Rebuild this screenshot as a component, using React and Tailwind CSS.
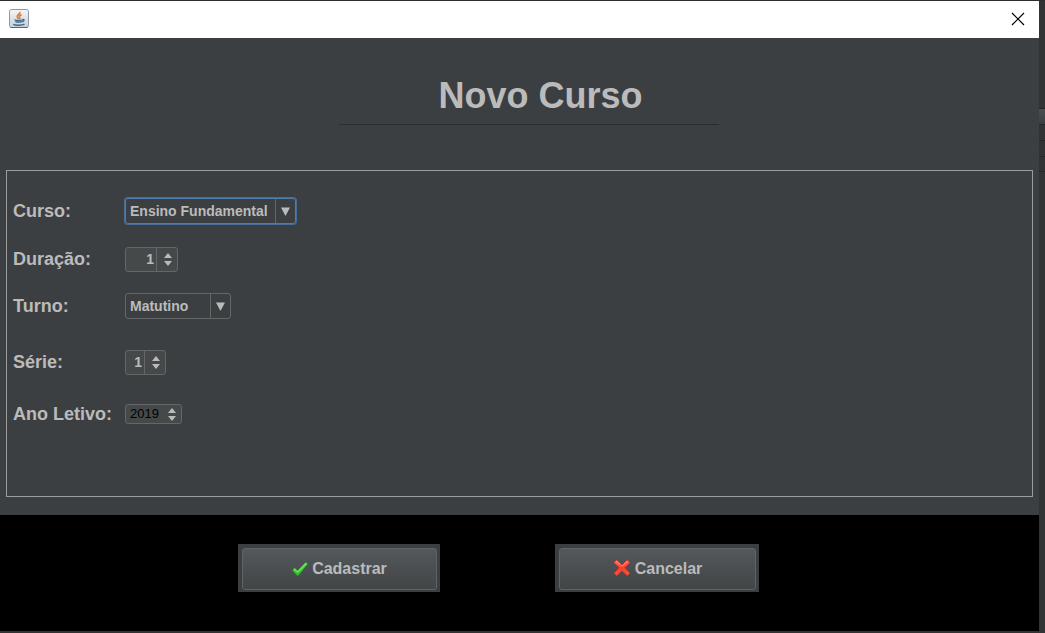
import React, { useState } from "react";

const FONT = "font-['Liberation_Sans',Arial,sans-serif]";

function JavaIcon() {
  return (
    <svg width="20" height="20" viewBox="0 0 20 20" aria-hidden="true">
      <defs>
        <linearGradient id="tile" x1="0" y1="0" x2="0" y2="1">
          <stop offset="0" stopColor="#f4f7f9" />
          <stop offset="1" stopColor="#c3d0da" />
        </linearGradient>
      </defs>
      <rect x="0.5" y="0.5" width="19" height="18" rx="2" fill="url(#tile)" stroke="#8b9aa6" />
      <path d="M1.5 18.5h17" stroke="#52687a" />
      <path d="M10.800 2.800c1 2-3.200 3-2.600 5 .2.900 1 1.300 1.400 2.200M12.600 5.600c-2 .8-2.700 1.600-2 2.700.5.800.3 1.200-.1 1.700" fill="none" stroke="#dc8045" strokeWidth="1.700" />
      <path d="M5.500 10.800c2 .7 6 .6 8 0M6.300 12.600c2 .6 4.600.6 6.400 0M13.500 10.500c2.200-.4 2 1.800-.6 2.400M4.300 15.200c1.500 1.400 9.500 1.300 11.200-.2" fill="none" stroke="#45698c" strokeWidth="1.400" />
    </svg>
  );
}

function CheckIcon() {
  return (
    <svg width="16" height="16" viewBox="0 0 16 16" aria-hidden="true">
      <defs>
        <linearGradient id="check" x1="0" y1="0" x2="0" y2="1">
          <stop offset="0" stopColor="#5be04a" />
          <stop offset="1" stopColor="#2fbe2c" />
        </linearGradient>
      </defs>
      <path d="M0.500 9.200 2.600 7l3 2.700L13.800 1.300l1.900 1.600L6.300 14.500H5z" fill="url(#check)" stroke="#239a22" strokeWidth="0.700" strokeLinejoin="round" />
      <path d="M1.800 9 2.700 8.200l2.900 2.800 8.200-8.500" fill="none" stroke="#a5f590" strokeWidth="0.900" />
    </svg>
  );
}

function CrossIcon() {
  return (
    <svg className="mb-0.5" width="18" height="18" viewBox="0 0 18 18" aria-hidden="true">
      <defs>
        <linearGradient id="cross" x1="0" y1="0" x2="0" y2="1">
          <stop offset="0" stopColor="#ff7668" />
          <stop offset="0.500" stopColor="#f6402a" />
          <stop offset="1" stopColor="#fa5a4a" />
        </linearGradient>
      </defs>
      <path d="M3.600 1 9 5.900 14.200 1 17 3.500 11.900 8.700 17 14.100 14.300 16.800 9 11.800 3.700 16.800 1 14.200 6.100 8.800 1 3.600z" fill="url(#cross)" stroke="#d42a20" strokeWidth="0.800" strokeLinejoin="round" />
      <path d="M2.300 3.600 3.700 2.200 9 7.200l5.200-5" fill="none" stroke="#ff9f90" strokeWidth="0.700" />
    </svg>
  );
}

function Row({ id, label, className = "", children }) {
  return (
    <div className={`flex h-7 items-center ${className}`}>
      <label htmlFor={id} className="w-28 shrink-0 text-lg leading-7 font-bold">
        {label}
      </label>
      {children}
    </div>
  );
}

function Combo({ id, options, focused, className }) {
  return (
    <div
      className={`relative flex h-[26px] rounded-[3px] border ${
        focused ? "border-[#4f7cb0] ring-1 ring-[#466d9b]" : "border-[#646768]"
      } ${className}`}
    >
      <select id={id} className="w-full appearance-none bg-transparent pl-1 text-sm font-bold outline-none">
        {options.map((o) => (
          <option key={o} className="bg-[#3c3f41]">{o}</option>
        ))}
      </select>
      <span className="pointer-events-none absolute inset-y-0 right-0 flex w-5 items-center justify-center border-l border-[#646768]">
        <svg width="9" height="9" viewBox="0 0 9 9" aria-hidden="true">
          <path d="M0 0.500h9L4.500 9z" fill="#bbbbbb" />
        </svg>
      </span>
    </div>
  );
}

function Spinner({ id, initial, divided = true, className, inputClass }) {
  const [value, setValue] = useState(initial);
  return (
    <div className={`flex rounded-[3px] border border-[#646768] bg-[#45494a] ${className}`}>
      <input
        id={id}
        type="text"
        inputMode="numeric"
        value={value}
        onChange={(e) => setValue(Number(e.target.value) || 0)}
        className={`w-0 min-w-0 flex-1 bg-transparent outline-none ${inputClass}`}
      />
      <span className={`flex w-[21px] flex-col items-center justify-center gap-[3px] pl-0.5 ${divided ? "border-l border-[#646768]" : ""}`}>
        <button type="button" aria-label="Aumentar" onClick={() => setValue(value + 1)}>
          <svg className="block" width="8" height="5" viewBox="0 0 8 5" aria-hidden="true">
            <path d="M4 0 8 5H0z" fill="#bbbbbb" />
          </svg>
        </button>
        <button type="button" aria-label="Diminuir" onClick={() => setValue(value - 1)}>
          <svg className="block" width="8" height="5" viewBox="0 0 8 5" aria-hidden="true">
            <path d="M0 0h8L4 5z" fill="#bbbbbb" />
          </svg>
        </button>
      </span>
    </div>
  );
}

function ActionButton({ icon, children, className }) {
  return (
    <button type="button" className={`h-12 bg-[#3c3f41] pt-1 pr-[3px] pb-0.5 pl-1 ${className}`}>
      <span className="flex h-full items-center justify-center gap-1 rounded-[3px] border border-[#5f6365] bg-linear-to-b from-[#53585a] to-[#414546] text-base font-bold">
        {icon}
        {children}
      </span>
    </button>
  );
}

export default function App() {
  return (
    <div className={`flex min-h-screen border-t border-[#2b2d2f] bg-[#313335] text-[#bbbbbb] ${FONT}`}>
      <div className="flex min-w-0 flex-1 flex-col pb-0.5">
        <header className="flex h-[37px] items-center justify-between bg-white pr-[14px] pb-0.5 pl-[9px]">
          <JavaIcon />
          <button type="button" aria-label="Fechar">
            <svg className="block" width="14" height="14" viewBox="0 0 14 14" aria-hidden="true">
              <path d="M1 1 13 13M13 1 1 13" stroke="#000000" strokeWidth="1.200" />
            </svg>
          </button>
        </header>

        <main className="flex flex-1 flex-col bg-[#3c3f41] px-1.5 pb-[18px]">
          <div className="flex h-[132px] flex-col items-center pt-[37px] pl-[18px]">
            <h1 className="pl-6 text-4xl leading-[42px] font-bold">Novo Curso</h1>
            <hr className="mt-[7px] w-[380px] border-[#2a2c2d]" />
          </div>

          <form className="flex-1 border border-[#9a9c9d] pt-[26px] pb-[68px] pl-1.5">
            <Row id="curso" label="Curso:">
              <Combo id="curso" focused className="w-[171px]" options={["Ensino Fundamental", "Ensino Médio"]} />
            </Row>
            <Row id="duracao" label="Duração:" className="mt-5">
              <Spinner id="duracao" initial={1} className="h-[25px] w-[53px]" inputClass="pr-0.5 text-right text-sm font-bold" />
            </Row>
            <Row id="turno" label="Turno:" className="mt-[19px]">
              <Combo id="turno" className="w-[106px]" options={["Matutino", "Vespertino", "Noturno"]} />
            </Row>
            <Row id="serie" label="Série:" className="mt-7">
              <Spinner id="serie" initial={1} className="h-[25px] w-[41px]" inputClass="pr-0.5 text-right text-sm font-bold" />
            </Row>
            <Row id="ano" label="Ano Letivo:" className="mt-6">
              <Spinner id="ano" initial={2019} divided={false} className="h-5 w-[57px]" inputClass="pl-1 text-[13px] text-black" />
            </Row>
          </form>
        </main>

        <footer className="flex justify-center gap-[115px] bg-black pt-[29px] pr-[42px] pb-[39px]">
          <ActionButton className="w-[202px]" icon={<CheckIcon />}>Cadastrar</ActionButton>
          <ActionButton className="w-[204px]" icon={<CrossIcon />}>Cancelar</ActionButton>
        </footer>
      </div>

      <div className="w-1.5 shrink-0 pt-[107px]" aria-hidden="true">
        <div className="h-4 border-t border-[#242627] bg-linear-to-b from-[#4b4f51] to-[#3c3f41]" />
        <div className="h-4 border-t border-[#242627]" />
        <div className="h-4 border-t border-[#242627]" />
        <div className="h-4 border-y border-[#242627]" />
      </div>
    </div>
  );
}
